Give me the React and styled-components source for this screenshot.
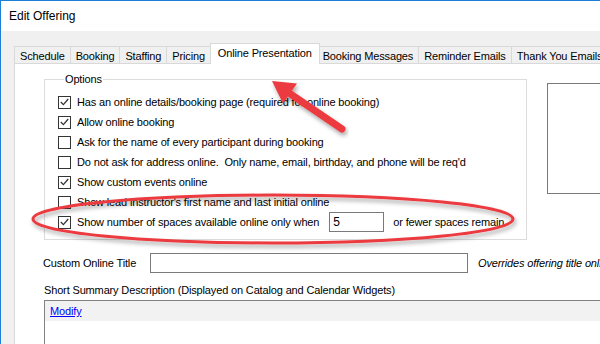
import React from 'react';
import styled, { createGlobalStyle } from 'styled-components';

const GlobalStyle = createGlobalStyle`
  body {
    margin: 0;
    font-family: "Liberation Sans", Arial, sans-serif;
    background: #f0f0f0;
  }
`;

const Window = styled.div`
  position: relative;
  width: 600px;
  height: 344px;
  overflow: hidden;
  box-sizing: border-box;
  background: #f0f0f0;
  border-top: 1px solid #1c7fd6;
  border-left: 1px solid #1c7fd6;
`;

const TitleBar = styled.div`
  height: 30px;
  background: #fff;
  display: flex;
  align-items: center;
  padding-left: 8px;
  font-size: 12px;
  color: #000;
`;

const TabStrip = styled.div`
  display: flex;
  align-items: flex-end;
  height: 20px;
  margin-top: 12px;
  padding-left: 13px;
`;

const Tab = styled.div`
  position: relative;
  box-sizing: border-box;
  display: flex;
  align-items: center;
  white-space: nowrap;
  font-size: 11px;
  letter-spacing: -0.15px;
  color: #000;
  border: 1px solid #d9d9d9;
  border-bottom: none;
  margin-left: -1px;
  height: ${p => (p.$active ? '21px' : '17px')};
  padding: ${p => (p.$active ? '0 7px 3px' : '1px 5px 0')};
  background: ${p => (p.$active ? '#fff' : '#f0f0f0')};
  margin-right: ${p => (p.$active ? '-2px' : '0')};
  margin-bottom: ${p => (p.$active ? '-1px' : '0')};
  z-index: ${p => (p.$active ? 2 : 1)};
  &:first-child {
    margin-left: 0;
  }
`;

const Panel = styled.div`
  margin-left: 13px;
  width: 700px;
  height: 300px;
  box-sizing: border-box;
  background: #fff;
  border: 1px solid #d9d9d9;
  padding: 9px 0 0 28px;
  font-size: 11px;
  letter-spacing: -0.15px;
  color: #000;
`;

const TopRow = styled.div`
  display: flex;
  align-items: flex-start;
`;

const GroupBox = styled.fieldset`
  box-sizing: border-box;
  width: 483px;
  height: 167px;
  margin: 0 0 0 1px;
  padding: 6px 0 0 13px;
  border: 1px solid #dcdcdc;
  display: flex;
  flex-direction: column;
`;

const Legend = styled.legend`
  padding: 0 1px;
  margin-left: 6px;
  line-height: 13px;
`;

const OptionRow = styled.label`
  display: flex;
  align-items: center;
  height: 20px;
  white-space: pre;
`;

const Box = styled.span`
  box-sizing: border-box;
  width: 13px;
  height: 13px;
  border: 1px solid #333;
  background: #fff;
  margin-right: 6px;
  display: flex;
  align-items: center;
  justify-content: center;
  flex-shrink: 0;
`;

const SmallInput = styled.div`
  box-sizing: border-box;
  width: 55px;
  height: 20px;
  border: 1px solid #7a7a7a;
  margin: 0 9px 0 10px;
  padding-left: 3px;
  display: flex;
  align-items: center;
  font-size: 12px;
`;

const Preview = styled.div`
  box-sizing: border-box;
  width: 80px;
  height: 111px;
  margin: 10px 0 0 20px;
  border: 1px solid #7a7a7a;
  background: #fff;
`;

const FieldRow = styled.div`
  display: flex;
  align-items: center;
  margin-top: 13px;
  white-space: nowrap;
`;

const FieldLabel = styled.span`
  width: 107px;
`;

const TextInput = styled.div`
  box-sizing: border-box;
  width: 318px;
  height: 20px;
  border: 1px solid #7a7a7a;
  background: #fff;
`;

const Hint = styled.span`
  margin-left: 10px;
  font-style: italic;
`;

const SectionLabel = styled.div`
  margin: 11px 0 0 1px;
  line-height: 13px;
`;

const SummaryBox = styled.div`
  box-sizing: border-box;
  margin: 3px 0 0 1px;
  height: 80px;
  border: 1px solid #828282;
  background: #fff;
`;

const SummaryBar = styled.div`
  height: 20px;
  background: #f2f2f2;
  display: flex;
  align-items: center;
  padding-left: 5px;
`;

const Link = styled.a`
  color: #0000ff;
  text-decoration: underline;
`;

const Overlay = styled.svg`
  position: absolute;
  top: -1px;
  left: -1px;
  pointer-events: none;
  z-index: 5;
`;

const Check = ({ on }) => (
  <Box>
    {on && (
      <svg width="9" height="8" viewBox="0 0 9 8">
        <path d="M0.8 4 L3.4 6.6 L8.2 1" fill="none" stroke="#333" strokeWidth="1.3" />
      </svg>
    )}
  </Box>
);

const tabs = ['Schedule', 'Booking', 'Staffing', 'Pricing', 'Online Presentation', 'Booking Messages', 'Reminder Emails', 'Thank You Emails'];

const options = [
  { text: 'Has an online details/booking page (required for online booking)', on: true },
  { text: 'Allow online booking', on: true },
  { text: 'Ask for the name of every participant during booking', on: false },
  { text: "Do not ask for address online.  Only name, email, birthday, and phone will be req'd", on: false },
  { text: 'Show custom events online', on: true },
  { text: "Show lead instructor's first name and last initial online", on: false },
];

export default function App() {
  return (
    <>
      <GlobalStyle />
      <Window>
        <TitleBar>Edit Offering</TitleBar>
        <TabStrip>
          {tabs.map(t => (
            <Tab key={t} $active={t === 'Online Presentation'}>{t}</Tab>
          ))}
        </TabStrip>
        <Panel>
          <TopRow>
            <GroupBox>
              <Legend>Options</Legend>
              {options.map(o => (
                <OptionRow key={o.text}>
                  <Check on={o.on} />
                  {o.text}
                </OptionRow>
              ))}
              <OptionRow>
                <Check on />
                Show number of spaces available online only when
                <SmallInput>5</SmallInput>
                or fewer spaces remain
              </OptionRow>
            </GroupBox>
            <Preview />
          </TopRow>
          <FieldRow>
            <FieldLabel>Custom Online Title</FieldLabel>
            <TextInput />
            <Hint>Overrides offering title online</Hint>
          </FieldRow>
          <SectionLabel>Short Summary Description (Displayed on Catalog and Calendar Widgets)</SectionLabel>
          <SummaryBox>
            <SummaryBar>
              <Link>Modify</Link>
            </SummaryBar>
          </SummaryBox>
        </Panel>
        <Overlay width="600" height="344" viewBox="0 0 600 344">
          <defs>
            <filter id="shadow" x="-10%" y="-30%" width="120%" height="170%">
              <feDropShadow dx="1.5" dy="3" stdDeviation="2" floodColor="#000" floodOpacity="0.35" />
            </filter>
          </defs>
          <ellipse cx="273" cy="219" rx="240" ry="24" fill="none" stroke="#ec3b3f" strokeWidth="3" filter="url(#shadow)" />
          <g filter="url(#shadow)" fill="#ec3b3f">
            <line x1="342" y1="129" x2="289" y2="93" stroke="#ec3b3f" strokeWidth="7" strokeLinecap="round" />
            <polygon points="272,81 297,83.5 283,103.5" />
          </g>
        </Overlay>
      </Window>
    </>
  );
}
